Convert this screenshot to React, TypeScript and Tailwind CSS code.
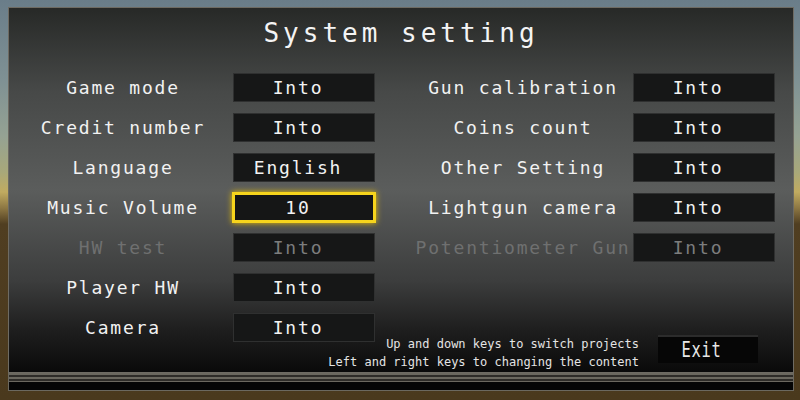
import React from "react";

type Row = { label: string; value: string; disabled?: boolean; active?: boolean };

const leftRows: Row[] = [
  { label: "Game mode", value: "Into" },
  { label: "Credit number", value: "Into" },
  { label: "Language", value: "English" },
  { label: "Music Volume", value: "10", active: true },
  { label: "HW test", value: "Into", disabled: true },
  { label: "Player HW", value: "Into" },
  { label: "Camera", value: "Into" },
];

const rightRows: Row[] = [
  { label: "Gun calibration", value: "Into" },
  { label: "Coins count", value: "Into" },
  { label: "Other Setting", value: "Into" },
  { label: "Lightgun camera", value: "Into" },
  { label: "Potentiometer Gun", value: "Into", disabled: true },
];

function SettingRow({ row }: { row: Row }) {
  return (
    <div className="flex h-[29px] items-center">
      <div
        className={
          "w-[220px] whitespace-nowrap text-center text-[18px] leading-[29px] tracking-[1.8px] " +
          (row.disabled ? "text-[#6f7070]" : "text-[#f2f2f2]")
        }
      >
        {row.label}
      </div>
      <div
        className={
          "flex h-[29px] w-[142px] items-center justify-center pr-[12px] text-[18px] tracking-[1.8px] " +
          (row.active
            ? "border-2 border-[#f6d41c] bg-[#151616] shadow-[0_0_6px_1px_#e8be00] ring-1 ring-[#f6d41c]"
            : "border border-[#2f3030] bg-[#161717]") +
          (row.disabled ? " text-[#7c7d7d]" : " text-[#f2f2f2]")
        }
      >
        {row.value}
      </div>
    </div>
  );
}

export default function App() {
  return (
    <div
      className="h-[400px] w-[800px] overflow-hidden pl-[8px] pt-[7px] bg-[linear-gradient(to_bottom,#6a7d89_0%,#7f9194_20%,#95a293_34%,#a8a87a_43%,#c1ab60_48%,#8d7743_52%,#503e21_56%,#4a391d_100%)]"
      style={{ fontFamily: '"DejaVu Sans Mono", "Liberation Mono", monospace' }}
    >
      <div className="w-[786px] border border-[#6e6b63] bg-[linear-gradient(to_bottom,#272927_0%,#474948_23%,#5b5d5c_50%,#3c3d3d_75%,#1f1f1f_88%,#0a0a0a_100%)] pt-[10px] pb-[1px]">
        <div className="text-center text-[26px] leading-[30px] tracking-[4px] text-[#f4f4f4]">
          System setting
        </div>
        <div className="mt-[25px] flex pl-[4px]">
          <div className="flex flex-col gap-[11px]">
            {leftRows.map((r) => (
              <SettingRow key={r.label} row={r} />
            ))}
          </div>
          <div className="ml-[38px] flex flex-col gap-[11px]">
            {rightRows.map((r) => (
              <SettingRow key={r.label} row={r} />
            ))}
          </div>
        </div>
        <div className="-mt-[7px] flex items-start justify-end">
          <div className="text-right text-[12px] leading-[18px] text-[#e4e4e4]">
            <div>Up and down keys to switch projects</div>
            <div>Left and right keys to changing the content</div>
          </div>
          <div className="ml-[19px] mr-[35px] flex h-[28px] w-[100px] items-center justify-center border-t-2 border-[#2c2c2c] bg-[#060606] pr-[14px]">
            <span className="inline-block scale-x-[0.7] text-[22px] leading-[26px] tracking-[1px] text-[#e8e8e8]">
              Exit
            </span>
          </div>
        </div>
      </div>
      <div className="flex w-[786px] flex-col">
        <div className="h-[2px] bg-[#6b685f]" />
        <div className="h-[2px] bg-[#2e2c28] border-x border-[#6b685f]" />
        <div className="h-[2px] bg-[#6b685f]" />
        <div className="h-[2px] bg-[#2e2c28] border-x border-[#6b685f]" />
        <div className="h-[1px] bg-[#6b685f]" />
        <div className="h-[9px] border-x border-b border-[#6b685f] bg-[#050505]" />
      </div>
    </div>
  );
}
